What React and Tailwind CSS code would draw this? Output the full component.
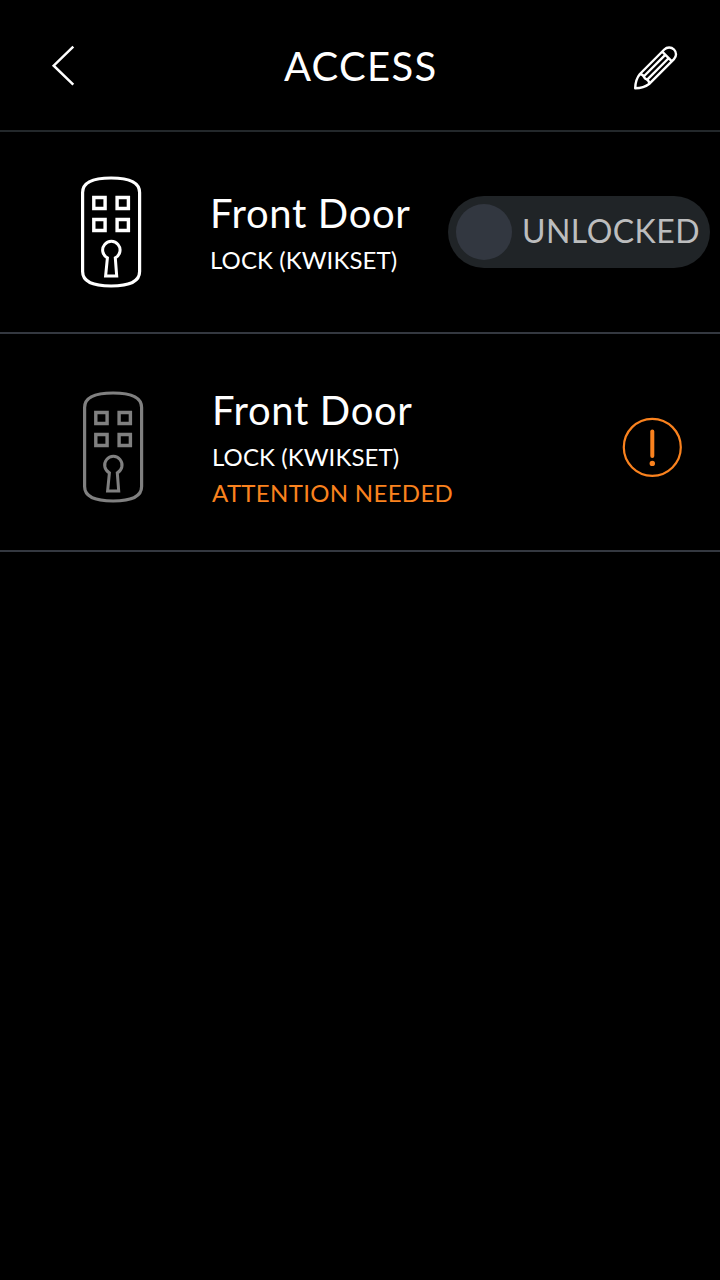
import React from "react";

function BackIcon() {
  return (
    <svg width="26" height="44" viewBox="0 0 26 44" fill="none" stroke="#fff" strokeWidth="2.5">
      <path d="M23.300 2.600 3.700 21.700 23.300 40.700" />
    </svg>
  );
}

function PencilIcon() {
  return (
    <svg width="48" height="48" viewBox="0 0 48 48" fill="none" stroke="#fff" strokeWidth="2.4" strokeLinejoin="round">
      <path d="M3.200 44.200c.1-5.500 1.500-10.200 4.700-14.200L32.300 5.500a6.850 6.850 0 0 1 9.700 9.700L17.500 39.700c-4 3.100-8.800 4.500-14.300 4.500Z" />
      <path d="M30.200 7.600l9.700 9.700M7.900 30c2.500.4 3.500 1.300 4 2.800.5 1.300 1.200 2 2.700 2.600 1.700.7 2.500 2 2.900 4.300M11.700 32.500l21.800-21.800M15 35.800l21.800-21.800" />
    </svg>
  );
}

function LockIcon({ className }) {
  return (
    <svg className={className} width="64" height="114" viewBox="0 0 64 114" fill="none" stroke="currentColor" strokeWidth="3.2">
      <path d="M3.600 17.500C3.600 7 14 3 32.100 3S60.600 7 60.600 17.500v79C60.600 107 50 111 32.100 111S3.600 107 3.600 96.500Z" />
      <path d="M14.800 22.500h11.300v11H14.800zM38.100 22.500h11.300v11H38.100zM14.800 44.500h11.300v11H14.800zM38.100 44.500h11.300v11H38.100z" strokeWidth="3.4" />
      <path d="M28.400 82.800a8.700 8.700 0 1 1 7.900 0l1.400 18.300H26.600Z" strokeWidth="3" />
    </svg>
  );
}

function AlertIcon() {
  return (
    <svg width="60" height="60" viewBox="0 0 60 60" fill="none" stroke="#fa821e">
      <circle cx="30.300" cy="30.300" r="28.500" strokeWidth="2.200" />
      <path d="M30.300 14.500v24.500" strokeWidth="4" strokeLinecap="round" />
      <circle cx="30.300" cy="46.400" r="2.700" fill="#fa821e" stroke="none" />
    </svg>
  );
}

export default function App() {
  return (
    <div className="flex min-h-screen w-[720px] flex-col bg-black font-['Lato',sans-serif] text-white">
      <header className="grid h-[132px] grid-cols-[1fr_auto_1fr] items-start border-b-2 border-[#23282b] px-[40px]">
        <button className="mt-[44px] ml-[10px] w-12">
          <BackIcon />
        </button>
        <h1 className="mt-[42px] mr-[-1.3px] text-[40px] leading-[48px] tracking-[1.3px]">ACCESS</h1>
        <button className="mt-[44px] justify-self-end">
          <PencilIcon />
        </button>
      </header>
      <section className="flex h-[202px] items-start border-b-2 border-[#343840] pr-[10px] pl-[79px]">
        <LockIcon className="mt-[43px] shrink-0 text-white" />
        <div className="mt-[57px] ml-[67px] w-[238px] whitespace-nowrap">
          <h2 className="text-[40px] leading-[48px] tracking-[0.65px]">Front Door</h2>
          <p className="mt-[5px] text-2xl leading-[36px] tracking-[0.08px]">LOCK (KWIKSET)</p>
        </div>
        <button className="mt-[64px] flex h-[72px] w-[262px] shrink-0 items-center rounded-full bg-[#202427] pl-2">
          <span className="size-14 rounded-full bg-[#323740]" />
          <span className="mb-[2px] ml-[10px] text-[32px] leading-[40px] tracking-[0.45px] text-[#bcbdbe]">UNLOCKED</span>
        </button>
      </section>
      <section className="flex h-[218px] items-start border-b-2 border-[#343840] pr-[38px] pl-[81px]">
        <LockIcon className="mt-[56px] shrink-0 text-[#808080]" />
        <div className="mt-[52px] ml-[67px] flex-1 whitespace-nowrap">
          <h2 className="text-[40px] leading-[48px] tracking-[0.65px]">Front Door</h2>
          <p className="mt-[5px] text-2xl leading-[36px] tracking-[0.08px]">LOCK (KWIKSET)</p>
          <p className="text-2xl leading-[36px] tracking-[0.32px] text-[#fa821e]">ATTENTION NEEDED</p>
        </div>
        <div className="mt-[83px]">
          <AlertIcon />
        </div>
      </section>
    </div>
  );
}
